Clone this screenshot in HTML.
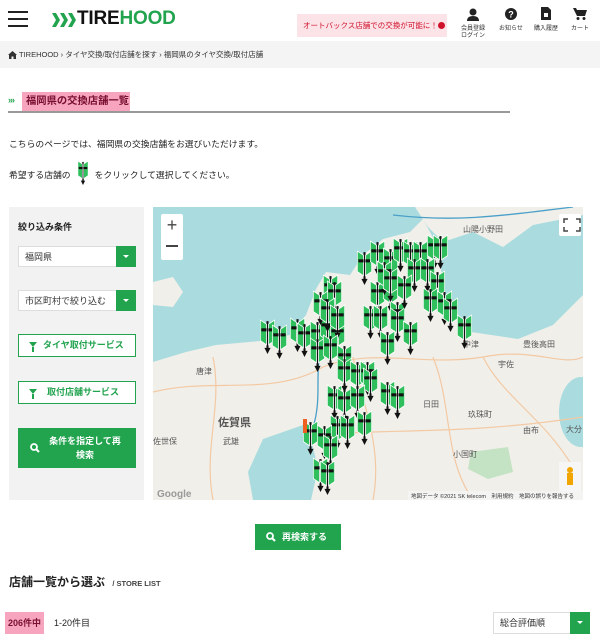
<!DOCTYPE html>
<html><head><meta charset="utf-8">
<style>
*{margin:0;padding:0;box-sizing:border-box;white-space:nowrap}
body{width:600px;height:642px;overflow:hidden;background:#fff;font-family:"Liberation Sans","Noto Sans CJK JP",sans-serif;color:#222;position:relative}
.a{position:absolute}
.sel{position:absolute;background:#fff;border:1px solid #ddd;font-size:9px;color:#333;padding-left:6px;line-height:20px}
.sel i{position:absolute;right:-1px;top:-1px;width:20px;height:21px;background:#22a44f}
.sel i:after{content:"";position:absolute;left:7px;top:9px;border:3px solid transparent;border-top:3px solid #fff}
.ob{position:absolute;left:18px;width:118px;height:23px;border:1px solid #22a44f;background:#fff;color:#22a44f;font-size:9px;font-weight:bold;line-height:21px}
.ob b{position:absolute;left:10px;top:7px;border:4px solid transparent;border-top:5px solid #22a44f;}
.ob b:after{content:"";position:absolute;left:-1px;top:0;width:2px;height:5px;background:#22a44f}
.ic{position:absolute;top:26px;font-size:6px;color:#333;text-align:center;line-height:7px}
</style></head><body>
<!-- header -->
<div class="a" style="left:8px;top:11px;width:20px;height:2px;background:#222"></div>
<div class="a" style="left:8px;top:18px;width:20px;height:2px;background:#222"></div>
<div class="a" style="left:8px;top:25px;width:20px;height:2px;background:#222"></div>
<svg class="a" style="left:52px;top:13px" width="24" height="14"><g fill="#22a44f"><polygon points="0,0 4,0 8,7 4,14 0,14 4,7"/><polygon points="8,0 12,0 16,7 12,14 8,14 12,7"/><polygon points="16,0 20,0 24,7 20,14 16,14 20,7"/></g></svg>
<div class="a" style="left:77px;top:8px;font-size:19px;font-weight:bold;letter-spacing:-0.2px;line-height:22px"><span style="color:#111">TIRE</span><span style="color:#22a44f">HOOD</span></div>
<div class="a" style="left:297px;top:14px;width:150px;height:23px;background:#fbe3e8;color:#d0112b;font-size:7.5px;line-height:23px;padding-left:6px">オートバックス店舗での交換が可能に！<span style="display:inline-block;width:7px;height:7px;border-radius:50%;background:#d0112b;vertical-align:-1px"></span></div>
<svg class="a" style="left:467px;top:8px" width="12" height="13"><circle cx="6" cy="4" r="3.5" fill="#222"/><path d="M0 13 Q0 8 6 8 Q12 8 12 13Z" fill="#222"/></svg>
<div class="ic" style="left:459px;width:28px">会員登録<br>ログイン</div>
<svg class="a" style="left:505px;top:8px" width="12" height="12"><circle cx="6" cy="6" r="6" fill="#222"/><text x="6" y="9.5" font-size="9" font-weight="bold" fill="#fff" text-anchor="middle" font-family="Liberation Sans">?</text></svg>
<div class="ic" style="left:497px;width:28px">お知らせ</div>
<svg class="a" style="left:541px;top:7px" width="10" height="13"><path d="M0 0H7L10 3V13H0Z" fill="#222"/><rect x="3" y="6" width="4" height="4" fill="#fff"/></svg>
<div class="ic" style="left:532px;width:28px">購入履歴</div>
<svg class="a" style="left:573px;top:8px" width="14" height="12"><path d="M0 0H3L4 2H14L12 8H4Z" fill="#222"/><circle cx="5" cy="10.5" r="1.5" fill="#222"/><circle cx="11" cy="10.5" r="1.5" fill="#222"/></svg>
<div class="ic" style="left:568px;width:24px">カート</div>
<!-- breadcrumb -->
<div class="a" style="left:0;top:41px;width:600px;height:27px;background:#f4f4f4;font-size:7.5px;line-height:27px;padding-left:19px;color:#333">TIREHOOD › タイヤ交換/取付店舗を探す › 福岡県のタイヤ交換/取付店舗</div>
<svg class="a" style="left:8px;top:51px" width="9" height="8"><path d="M4.5 0L9 4H8V8H5.5V5.5H3.5V8H1V4H0Z" fill="#333"/></svg>
<!-- title -->
<div class="a" style="left:8px;top:95px;font-size:9px;color:#22a44f;font-weight:bold;letter-spacing:-1px">›››</div>
<div class="a" style="left:22px;top:92px;width:108px;height:19px;background:#f7a4bf;color:#7a1030;font-size:10.3px;font-weight:bold;line-height:19px;padding-left:4px">福岡県の交換店舗一覧</div>
<div class="a" style="left:8px;top:111px;width:502px;height:2px;background:#999"></div>
<div class="a" style="left:9px;top:137px;font-size:8.8px;color:#222">こちらのページでは、福岡県の交換店舗をお選びいただけます。</div>
<div class="a" style="left:9px;top:168px;font-size:8.8px;color:#222">希望する店舗の<span style="display:inline-block;width:24px"></span>をクリックして選択してください。</div>
<svg class="a" style="left:76px;top:159px" width="14" height="26" viewBox="0 0 14 36"><use href="#mk"/></svg>
<!-- sidebar -->
<div class="a" style="left:9px;top:207px;width:135px;height:293px;background:#f2f2f2"></div>
<div class="a" style="left:18px;top:220px;font-size:9px;font-weight:bold">絞り込み条件</div>
<div class="sel" style="left:18px;top:246px;width:118px;height:21px">福岡県<i></i></div>
<div class="sel" style="left:18px;top:290px;width:118px;height:21px">市区町村で絞り込む<i></i></div>
<div class="ob" style="top:334px;padding-left:24px"><b></b>タイヤ取付サービス</div>
<div class="ob" style="top:381px;padding-left:28px"><b></b>取付店舗サービス</div>
<div class="a" style="left:18px;top:428px;width:118px;height:40px;background:#22a44f;color:#fff;font-size:9px;font-weight:bold;text-align:center;line-height:14px;padding:6px 6px 0 22px">条件を指定して再<br>検索</div>
<svg class="a" style="left:30px;top:443px" width="10" height="10"><circle cx="4" cy="4" r="3" fill="none" stroke="#fff" stroke-width="1.8"/><line x1="6" y1="6" x2="9" y2="9" stroke="#fff" stroke-width="2"/></svg>
<!-- map -->
<svg class="a" style="left:153px;top:207px" width="430" height="293">
<defs>
<symbol id="mk" viewBox="0 0 14 36"><rect x="6" y="4" width="2" height="27" fill="#111"/><polygon points="4,30 10,30 7,36" fill="#111"/><g stroke="#fff" stroke-width="0.8"><polygon points="0,3 6,7 6,27 0,23" fill="#2fbf5c"/><polygon points="14,3 8,7 8,27 14,23" fill="#2fbf5c"/></g><rect x="1" y="11" width="5" height="3" fill="#111"/><rect x="8" y="11" width="5" height="3" fill="#111"/></symbol>
</defs>
<rect width="430" height="293" fill="#aadcdf"/>
<polygon points="0,155 33,145 63,138 107,134 137,128 153,108 163,82 173,65 197,68 210,48 230,32 257,25 270,12 285,40 292,90 318,125 365,132 400,118 430,88 430,293 0,293" fill="#f1efea"/>
<polygon points="262,0 430,0 430,8 380,18 350,40 320,25 290,35 275,20" fill="#f1efea"/>
<polygon points="0,75 20,70 30,85 20,100 0,98" fill="#f1efea"/>
<ellipse cx="428" cy="205" rx="22" ry="35" fill="#aadcdf"/>
<polygon points="110,232 150,218 160,240 165,262 158,293 100,293 95,265" fill="#aadcdf"/>
<polygon points="318,245 355,240 360,265 335,272 315,262" fill="#c4e3c4"/>
<g fill="none" stroke="#f3c9a3" stroke-width="1.2">
<path d="M0 185 C60 170 120 190 170 160 C220 140 270 160 330 150 C380 140 410 160 430 150"/>
<path d="M60 150 C70 200 50 240 60 293"/><path d="M200 150 C210 200 230 240 220 293"/><path d="M280 150 C300 200 290 250 320 293"/><path d="M150 230 C220 220 300 230 430 210"/><path d="M330 150 C350 190 390 210 420 260"/>
</g>
<path d="M160 220 C170 190 160 160 170 140" stroke="#4aa0c8" stroke-width="1.3" fill="none"/>
<path d="M240 8 C300 15 340 10 420 0" stroke="#4aa0c8" stroke-width="1.3" fill="none"/>
<rect x="8" y="7" width="22" height="46" rx="2" fill="#fff"/>
<text x="19" y="24" font-size="18" text-anchor="middle" fill="#444" font-family="Liberation Sans">+</text>
<rect x="13" y="38" width="12" height="2" fill="#444"/>
<rect x="406" y="7" width="22" height="22" rx="2" fill="#fff"/>
<path d="M411 16V12H415M423 12H427V16M427 20V24H423M415 24H411V20" stroke="#444" stroke-width="1.5" fill="none"/>
<rect x="406" y="255" width="22" height="30" fill="#f6f6f6"/>
<circle cx="417" cy="263" r="3" fill="#f0a500"/><rect x="414" y="266" width="6" height="12" fill="#f0a500"/>
<text x="4" y="290" font-size="10" fill="#999" font-family="Liberation Sans" font-weight="bold">Google</text>
<rect x="255" y="284" width="175" height="9" fill="#f5f5f5" opacity=".8"/>
<text x="258" y="291" font-size="5.5" fill="#333" font-family="Liberation Sans, Noto Sans CJK JP">地図データ ©2021 SK telecom　利用規約　地図の誤りを報告する</text>
<g font-size="8" fill="#555" font-family="Liberation Sans, Noto Sans CJK JP">
<text x="65" y="219" font-size="11" font-weight="bold">佐賀県</text><text x="270" y="200">日田</text><text x="315" y="210">玖珠町</text><text x="413" y="225">大分</text><text x="310" y="140">中津</text><text x="370" y="140">豊後高田</text><text x="345" y="160">宇佐</text><text x="0" y="237">佐世保</text><text x="70" y="237">武雄</text><text x="43" y="167">唐津</text><text x="310" y="25">山陽小野田</text><text x="370" y="226">由布</text><text x="300" y="250">小国町</text>
</g>
<g>
<use href="#mk" x="107" y="110" width="15" height="37"/><use href="#mk" x="119" y="115" width="15" height="37"/><use href="#mk" x="137" y="108" width="15" height="37"/><use href="#mk" x="144" y="113" width="15" height="37"/><use href="#mk" x="157" y="111" width="15" height="37"/><use href="#mk" x="167" y="105" width="15" height="37"/><use href="#mk" x="177" y="111" width="15" height="37"/><use href="#mk" x="170" y="65" width="15" height="37"/><use href="#mk" x="174" y="71" width="15" height="37"/><use href="#mk" x="160" y="81" width="15" height="37"/><use href="#mk" x="167" y="88" width="15" height="37"/><use href="#mk" x="177" y="95" width="15" height="37"/><use href="#mk" x="157" y="128" width="15" height="37"/><use href="#mk" x="170" y="125" width="15" height="37"/><use href="#mk" x="184" y="135" width="15" height="37"/><use href="#mk" x="184" y="148" width="15" height="37"/><use href="#mk" x="197" y="151" width="15" height="37"/><use href="#mk" x="207" y="151" width="15" height="37"/><use href="#mk" x="210" y="158" width="15" height="37"/><use href="#mk" x="174" y="175" width="15" height="37"/><use href="#mk" x="184" y="178" width="15" height="37"/><use href="#mk" x="197" y="175" width="15" height="37"/><use href="#mk" x="227" y="171" width="15" height="37"/><use href="#mk" x="237" y="175" width="15" height="37"/><use href="#mk" x="204" y="201" width="15" height="37"/><use href="#mk" x="177" y="205" width="15" height="37"/><use href="#mk" x="187" y="205" width="15" height="37"/><use href="#mk" x="150" y="211" width="15" height="37"/><use href="#mk" x="164" y="215" width="15" height="37"/><use href="#mk" x="170" y="225" width="15" height="37"/><use href="#mk" x="160" y="248" width="15" height="37"/><use href="#mk" x="167" y="251" width="15" height="37"/><use href="#mk" x="204" y="41" width="15" height="37"/><use href="#mk" x="217" y="31" width="15" height="37"/><use href="#mk" x="230" y="38" width="15" height="37"/><use href="#mk" x="240" y="28" width="15" height="37"/><use href="#mk" x="250" y="31" width="15" height="37"/><use href="#mk" x="260" y="31" width="15" height="37"/><use href="#mk" x="274" y="25" width="15" height="37"/><use href="#mk" x="280" y="25" width="15" height="37"/><use href="#mk" x="254" y="48" width="15" height="37"/><use href="#mk" x="267" y="48" width="15" height="37"/><use href="#mk" x="277" y="61" width="15" height="37"/><use href="#mk" x="217" y="71" width="15" height="37"/><use href="#mk" x="230" y="68" width="15" height="37"/><use href="#mk" x="210" y="95" width="15" height="37"/><use href="#mk" x="220" y="95" width="15" height="37"/><use href="#mk" x="237" y="91" width="15" height="37"/><use href="#mk" x="237" y="98" width="15" height="37"/><use href="#mk" x="227" y="121" width="15" height="37"/><use href="#mk" x="250" y="111" width="15" height="37"/><use href="#mk" x="270" y="78" width="15" height="37"/><use href="#mk" x="284" y="81" width="15" height="37"/><use href="#mk" x="290" y="88" width="15" height="37"/><use href="#mk" x="304" y="105" width="15" height="37"/><use href="#mk" x="224" y="51" width="15" height="37"/><use href="#mk" x="230" y="58" width="15" height="37"/><use href="#mk" x="244" y="65" width="15" height="37"/>
</g>
<rect x="150" y="212" width="4" height="14" fill="#f06020"/>
</svg>
<!-- bottom -->
<div class="a" style="left:255px;top:524px;width:86px;height:26px;background:#22a44f;color:#fff;font-size:9px;font-weight:bold;line-height:26px;padding-left:27px">再検索する</div>
<svg class="a" style="left:266px;top:532px" width="10" height="10"><circle cx="4" cy="4" r="3" fill="none" stroke="#fff" stroke-width="1.8"/><line x1="6" y1="6" x2="9" y2="9" stroke="#fff" stroke-width="2"/></svg>
<div class="a" style="left:9px;top:573px;font-size:12px;font-weight:bold;color:#222">店舗一覧から選ぶ <span style="font-size:7.5px;color:#444;margin-left:4px">/ STORE LIST</span></div>
<div class="a" style="left:5px;top:612px;width:39px;height:22px;background:#f7a4bf;color:#7a1030;font-size:9px;font-weight:bold;line-height:22px;text-align:center">206件中</div>
<div class="a" style="left:54px;top:612px;font-size:9px;line-height:22px;color:#222">1-20件目</div>
<div class="sel" style="left:493px;top:612px;width:97px;height:22px;line-height:20px">総合評価順<i style="height:22px"></i></div>
</body></html>
